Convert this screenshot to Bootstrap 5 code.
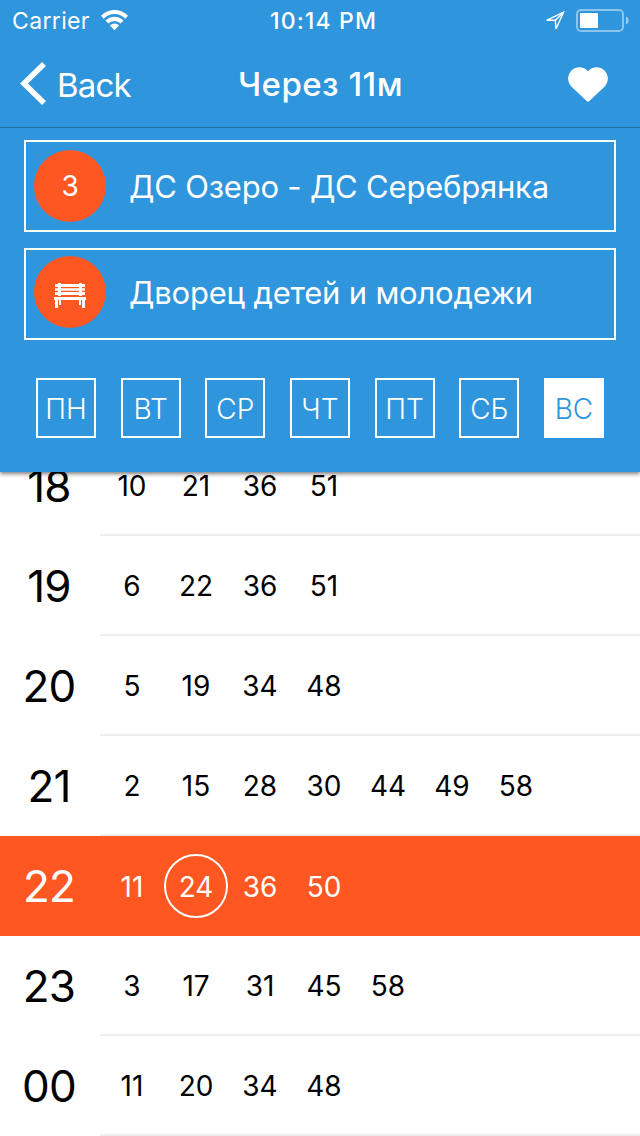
<!DOCTYPE html>
<html lang="ru">
<head>
<meta charset="utf-8">
<meta name="viewport" content="width=device-width, initial-scale=1">
<title>Через 11м</title>
<link rel="stylesheet" href="https://cdn.jsdelivr.net/npm/bootstrap@5.3.0/dist/css/bootstrap.min.css">
<style>
  :root { --sky: #2f95dc; --flame: #ff5722; }
  body { font-family: Inter, "Liberation Sans", sans-serif; color: #000; background: #fff; height: 1136px; overflow: hidden; line-height: 1; }
  svg { display: block; }
  .top-panel { background: var(--sky); color: #fff; height: 472px; z-index: 2; box-shadow: 0 2px 4px rgba(0,0,0,.5); }
  .status { height: 40px; font-size: 23px; padding: 2px 10px 0 12px; }
  .status > * { flex: 1 1 0; }
  .carrier { letter-spacing: .35px; }
  .clock { font-weight: 500; letter-spacing: 1.15px; padding-left: 5px; white-space: nowrap; }
  .title-bar { height: 88px; border-bottom: 1px solid #226da3; padding: 1px 32px 0 20px; font-size: 33px; }
  .title-bar > * { flex: 1 1 0; }
  .title-bar h1 { font-size: 33px; font-weight: 500; line-height: 1; letter-spacing: .45px; padding-left: 13px; padding-top: 1px; }
  .back-label { letter-spacing: -.8px; padding-top: 2px; }
  .pickers { padding-top: 12px; }
  .picker { height: 92px; border: 2px solid #fff; padding-left: 8px; font-size: 31px; gap: 23px; letter-spacing: -.2px; }
  .disc { width: 72px; height: 72px; background: var(--flame); font-size: 28px; }
  .disc-stop { margin-bottom: 4px; }
  .stop-name { margin-bottom: 4px; }
  .days { padding: 38px 36px 0; }
  .day { width: 60px; height: 60px; border: 2px solid #fff; font-size: 28px; font-weight: 300; color: #fff; padding-top: 1px; }
  .day.on { background: #fff; color: var(--sky); }
  .timetable { margin-top: -36px; }
  .hour-row { height: 100px; }
  .hour { width: 100px; font-size: 44px; letter-spacing: -.8px; padding-right: 2px; }
  .minutes { border-bottom: 2px solid #efefef; font-size: 28px; padding-top: 1px; }
  .minute { width: 64px; height: 64px; padding-top: 1px; }
  .now { background: var(--flame); color: #fff; }
  .now .minutes { border: 0; padding: 0; }
  .next { border: 2px solid #fff; }
</style>
</head>
<body>
<header class="top-panel position-relative">
  <div class="status d-flex align-items-center">
    <div class="d-flex align-items-center gap-2"><span class="carrier">Carrier</span>
      <svg width="32" height="22" viewBox="0 0 32 22" fill="#fff"><path d="M3 5.800a18.500 18.500 0 0 1 27 0l-2.700 2.900a15 15 0 0 0-21.600 0z"/><path d="M7.500 10.600a12.500 12.500 0 0 1 18 0l-2.800 2.900a8.700 8.700 0 0 0-12.400 0z"/><path d="M11.900 15.400a6.500 6.500 0 0 1 9.200 0L16.500 20.200z"/></svg>
    </div>
    <div class="clock text-center">10:14 PM</div>
    <div class="d-flex align-items-center justify-content-end">
      <svg class="me-2" width="28" height="22" viewBox="0 0 28 22" fill="none" stroke="#fff" stroke-width="1.400"><path d="M6.500 10.300 23.500 2.100 16 19 15.300 10.300z"/><path d="m15.400 10.200 7.600-7.500"/></svg>
      <svg width="54" height="24" viewBox="0 0 54 24"><rect x="1" y="1" width="46" height="21" rx="4" fill="none" stroke="#fff" stroke-opacity=".45" stroke-width="2"/><rect x="4" y="4" width="18" height="15" rx="1" fill="#fff"/><path d="M50 7.500c3.500 1 3.500 7 0 8z" fill="#fff" fill-opacity=".5"/></svg>
    </div>
  </div>
  <nav class="title-bar d-flex align-items-center">
    <div class="d-flex align-items-center">
      <svg width="37" height="44" viewBox="0 0 37 44" fill="none" stroke="#fff" stroke-width="5.500"><path d="M24 2 4 21.500 24 41"/></svg>
      <span class="back-label">Back</span>
    </div>
    <h1 class="text-center text-nowrap mb-0">Через 11м</h1>
    <div class="d-flex justify-content-end">
      <svg width="40" height="35" viewBox="0 0 40 35" fill="#fff"><path d="M20 4.500C16-1 8-.9 3.800 3.200-.8 7.700-1.300 14.500 3.500 19.800L19 34.300q1 .9 2 0L36.500 19.800C41.300 14.500 40.800 7.700 36.200 3.200 32-.9 24-1 20 4.500z"/></svg>
    </div>
  </nav>
  <div class="pickers d-flex flex-column gap-3 px-4">
    <div class="picker d-flex align-items-center">
      <span class="disc rounded-circle d-flex align-items-center justify-content-center">3</span><span>ДС Озеро - ДС Серебрянка</span>
    </div>
    <div class="picker d-flex align-items-center">
      <span class="disc disc-stop rounded-circle d-flex align-items-center justify-content-center">
        <svg class="mt-2" width="32" height="27" viewBox="0 0 32 27" fill="#fff"><path d="M1 1h30v3H1zM1 5.200h30v2.600H1zM1 9h30v3H1zM4 0h3v13H4zM25 0h3v13h-3zM0 14h32v3H0zM1 17h3v8H1zM5 17h2v5H5zM25 17h2v5h-2zM28 17h3v8h-3z"/></svg>
      </span><span class="stop-name">Дворец детей и молодежи</span>
    </div>
  </div>
  <div class="days d-flex justify-content-between">
    <span class="day d-flex align-items-center justify-content-center">ПН</span>
    <span class="day d-flex align-items-center justify-content-center">ВТ</span>
    <span class="day d-flex align-items-center justify-content-center">СР</span>
    <span class="day d-flex align-items-center justify-content-center">ЧТ</span>
    <span class="day d-flex align-items-center justify-content-center">ПТ</span>
    <span class="day d-flex align-items-center justify-content-center">СБ</span>
    <span class="day on d-flex align-items-center justify-content-center">ВС</span>
  </div>
</header>
<main class="timetable" id="timetable"></main>
<script src="https://cdn.jsdelivr.net/npm/bootstrap@5.3.0/dist/js/bootstrap.bundle.min.js"></script>
<script>
  const hours = [
    ['18', [10, 21, 36, 51]],
    ['19', [6, 22, 36, 51]],
    ['20', [5, 19, 34, 48]],
    ['21', [2, 15, 28, 30, 44, 49, 58]],
    ['22', [11, 24, 36, 50]],
    ['23', [3, 17, 31, 45, 58]],
    ['00', [11, 20, 34, 48]]
  ];
  const center = 'd-flex align-items-center justify-content-center';
  document.getElementById('timetable').innerHTML = hours.map(([hour, minutes]) => {
    const now = hour === '22';
    const cells = minutes.map(m =>
      `<span class="minute ${center} ${now && m === 24 ? 'next rounded-circle' : ''}">${m}</span>`).join('');
    return `<div class="hour-row d-flex ${now ? 'now' : ''}"><div class="hour ${center}">${hour}</div>` +
      `<div class="minutes d-flex align-items-center flex-fill">${cells}</div></div>`;
  }).join('');
</script>
</body>
</html>
